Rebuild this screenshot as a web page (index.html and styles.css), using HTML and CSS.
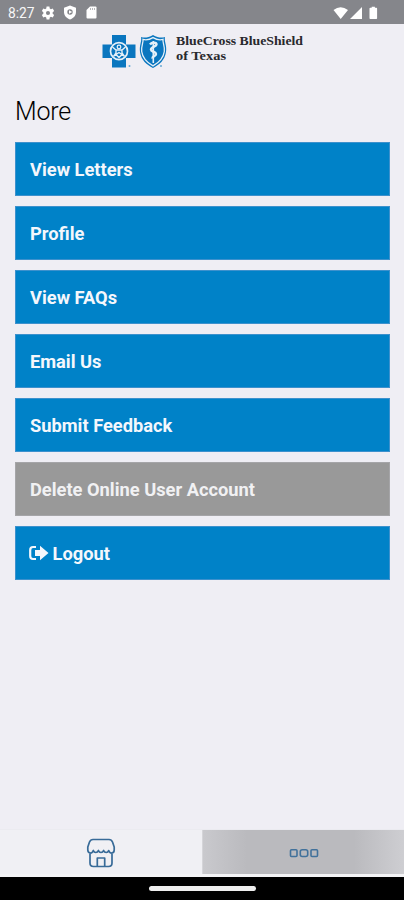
FILE: index.html
```
<!DOCTYPE html>
<html lang="en">
<head>
<meta charset="utf-8">
<title>More</title>
<link rel="stylesheet" href="styles.css">
</head>
<body>
<div class="status">
  <span class="time">8:27</span>
  <svg class="gear" width="14" height="14" viewBox="0 0 24 24"><path fill="#fff" fill-rule="evenodd" d="M9.600 1h4.800l.6 3.200 2 1.200 3.100-1.100 2.400 4.100L20 10.600v2.800l2.500 2.200-2.400 4.100-3.100-1.100-2 1.200-.6 3.200H9.600L9 19.800l-2-1.200-3.100 1.100-2.400-4.100L4 13.400v-2.800L1.500 8.400l2.400-4.100L7 5.400l2-1.200zM12 8.500a3.500 3.500 0 1 0 0 7a3.500 3.500 0 0 0 0-7z"/></svg>
  <svg class="safe" width="14" height="15" viewBox="0 0 14 15"><path fill="#fff" d="M7 .5 13 2.700V7c0 3.700-2.600 6.300-6 7.500C3.600 13.300 1 10.700 1 7V2.700z"/><circle cx="7" cy="7" r="2.700" fill="#85868a"/><path fill="#fff" d="M6 5.300 9.200 7 6 8.700z"/></svg>
  <svg class="card" width="11" height="13" viewBox="0 0 11 13"><path fill="#fff" d="M4 .5h5.500q1 0 1 1v10q0 1-1 1h-8q-1 0-1-1V4z"/><path stroke="#a5a6a9" stroke-width=".8" d="M4.500 2v2M6.500 2v2M8.500 2v2"/></svg>
  <svg class="signals" width="46" height="14" viewBox="0 0 46 14"><path fill="#fff" d="M.5 4Q7.500-1.500 15 4L7.700 13zM29 1v12H17zM36.500 2.500q0-.7.7-.7h1.500V.8h3.200v1h1.500q.7 0 .7.700V12.300q0 .7-.7.700h-6.200q-.7 0-.7-.7z"/></svg>
</div>
<header class="brand">
  <svg width="66" height="36" viewBox="0 0 66 36">
    <g fill="#0a76bf">
      <path d="M11 1h14v9.500h9.500v13.500H25v9.500H11V24H1.500V10.500H11z"/>
      <path d="M52 1C47 4 43 4 40 3C41 8 38 11 39 18C40 26 46 31 52 34C58 31 64 26 65 18C66 11 63 8 64 3C61 4 57 4 52 1z"/>
    </g>
    <g fill="none" stroke="#e6f0f8">
      <circle cx="18" cy="17.200" r="8.500" stroke-width="1.700"/>
      <circle cx="18" cy="13" r="1.800" stroke-width="1.300"/>
      <path stroke-width="1.400" d="M11.500 13l3.500 3h6l3.500-3M15 16v3l-2.500 3.500M21 16v3l2.500 3.500M15 20.500l3-2 3 2-3 3z"/>
      <path stroke-width="1.300" d="M52 3.600C48 6 45 6.200 42 5.400C42.500 9 40 12 40.700 17.500C41.600 24.500 46 28.500 52 31.900C58 28.500 62.400 24.500 63.300 17.500C64 12 61.500 9 62 5.400C59 6.200 56 6 52 3.600z"/>
      <path stroke-width="1.600" d="M52.300 7v22"/>
      <path stroke-width="2.500" d="M49 10.500c2-2.500 6.500-2 6.500 0s-5.500 2.500-5.500 5 5 2 5 4.500-4 2-3.500 4.500"/>
    </g>
    <g fill="#68a9d5"><circle cx="28.500" cy="32" r="1"/><circle cx="60" cy="32" r="1"/></g>
  </svg>
  <svg class="wordmark" width="132" height="32" viewBox="0 0 132 32">
    <text x="1" y="12" textLength="127" lengthAdjust="spacingAndGlyphs">BlueCross BlueShield</text>
    <text x="1" y="27" textLength="50" lengthAdjust="spacingAndGlyphs">of Texas</text>
  </svg>
</header>
<main>
  <h1>More</h1>
  <nav class="menu">
    <a class="item">View Letters</a>
    <a class="item">Profile</a>
    <a class="item">View FAQs</a>
    <a class="item">Email Us</a>
    <a class="item">Submit Feedback</a>
    <a class="item muted">Delete Online User Account</a>
    <a class="item"><svg class="exit" width="20" height="16" viewBox="0 0 20 16"><path d="M7 2H4Q1.200 2 1.200 5v6q0 3 2.800 3h3" fill="none" stroke="#f4f7fc" stroke-width="2.200"/><path d="M6 5h5V.8L19.500 8 11 15.200V11H6z" fill="#f4f7fc"/></svg>Logout</a>
  </nav>
</main>
<footer class="tabs">
  <div class="tab"><svg width="30" height="30" viewBox="0 0 30 30" fill="none" stroke="#386b98" stroke-width="1.700" stroke-linejoin="round"><path d="M7 1.500h16Q25.500 1.500 26.500 4l1.700 5v3q0 3-2.700 3-2 0-2.800-2.500-.7 2-2.500 2t-2.600-2q-.8 2-2.600 2t-2.600-2q-.8 2-2.600 2t-2.500-2Q6.500 15 4.500 15 1.800 15 1.800 12V9L3.500 4Q4.500 1.500 7 1.500zM4 15v10q0 3.500 3.500 3.500h15Q26 28.500 26 25V15"/><path d="M11.300 28v-8h7.400v8"/></svg></div>
  <div class="tab active"><svg width="30" height="10" viewBox="0 0 30 10" fill="none" stroke="#41719b" stroke-width="1.600"><rect x="1.500" y="1.700" width="6.500" height="6.800" rx="1"/><rect x="11.300" y="1.700" width="7.400" height="6.800" rx="2"/><rect x="22" y="1.700" width="6.500" height="6.800" rx="1"/></svg></div>
</footer>
<div class="system"><span class="handle"></span></div>
</body>
</html>
```
FILE: styles.css
```
* { box-sizing: border-box; }
body {
  margin: 0;
  height: 900px;
  display: flex;
  flex-direction: column;
  overflow: hidden;
  background: #efeef4;
  font-family: Roboto, sans-serif;
}
svg { display: block; flex: none; }
.status {
  height: 24px;
  flex: none;
  display: flex;
  align-items: center;
  padding: 1px 25px 0 8px;
  background: #85868b;
  color: #f7f7f8;
}
.time { width: 33px; font-size: 13.8px; line-height: 24px; }
.safe { margin-left: 8px; }
.card { margin-left: 9px; }
.signals { margin-left: auto; }
.brand {
  height: 50px;
  flex: none;
  display: flex;
  padding: 10px 0 0 101px;
}
.wordmark {
  margin: -1px 0 0 8px;
  font: bold 12.5px "Liberation Serif", serif;
  fill: #29292d;
}
main { flex: 1; padding: 22px 14px 0 15px; }
h1 {
  margin: 0 0 15px;
  font-size: 25px;
  font-weight: 300;
  line-height: 31px;
  letter-spacing: -0.2px;
  color: #000;
}
.menu { display: flex; flex-direction: column; gap: 10px; }
.item {
  height: 54px;
  display: flex;
  align-items: center;
  padding: 0 14px;
  border: 1px solid #3d91cd;
  background: #0082c8;
  color: #f4f7fc;
  font-size: 18.27px;
  font-weight: 700;
}
.muted { background: #999; border-color: #a5a5a8; color: #f1f1f3; }
.exit { margin: 0 3.5px 0 -1px; }
.tabs {
  height: 48px;
  flex: none;
  display: flex;
  border-top: 1px solid #ebebf0;
  border-bottom: 3px solid #f4f4f6;
  background: #f0f0f4;
}
.tab {
  width: 202px;
  display: flex;
  align-items: center;
  justify-content: center;
  padding-top: 2px;
}
.active {
  background: linear-gradient(90deg, #c9c9cd, #bababe 22%, #bababe 75%, #ceced2);
  border-left: 1px solid #d5d5d9;
}
.system {
  height: 23px;
  flex: none;
  display: flex;
  justify-content: center;
  padding-top: 9px;
  background: #000;
}
.handle { width: 107px; height: 5px; border-radius: 3px; background: #eee; }
```
